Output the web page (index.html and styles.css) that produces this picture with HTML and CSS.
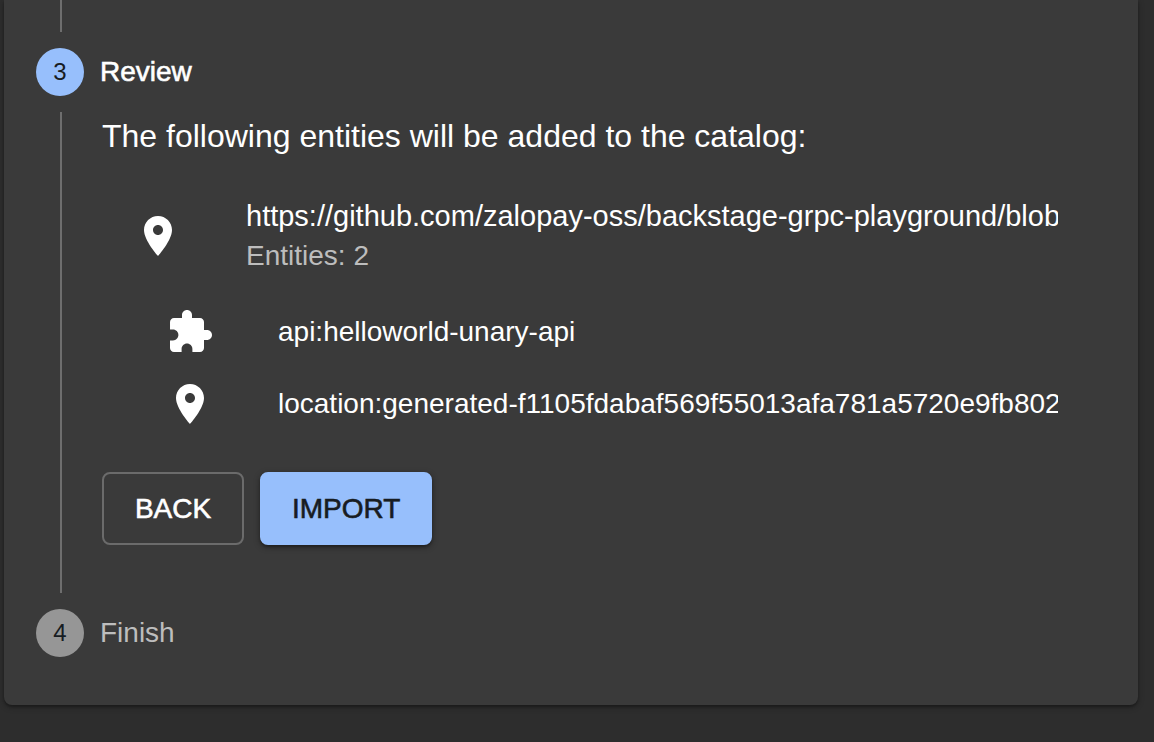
FILE: index.html
```html
<!DOCTYPE html>
<html lang="en">
<head>
<meta charset="utf-8">
<meta name="viewport" content="width=device-width, initial-scale=1">
<title>Import entities</title>
<link rel="stylesheet" href="styles.css">
</head>
<body>
<svg class="sprite" aria-hidden="true">
  <symbol id="icon-location" viewBox="0 0 24 24"><path d="M12 2C8.130 2 5 5.130 5 9c0 5.250 7 13 7 13s7-7.750 7-13c0-3.870-3.130-7-7-7zm0 9.500c-1.380 0-2.500-1.120-2.500-2.500s1.120-2.500 2.500-2.500 2.500 1.120 2.500 2.500-1.120 2.500-2.500 2.500z"/></symbol>
  <symbol id="icon-extension" viewBox="0 0 24 24"><path d="M20.500 11H19V7c0-1.100-.9-2-2-2h-4V3.500C13 2.120 11.880 1 10.500 1S8 2.120 8 3.500V5H4c-1.100 0-1.990.9-1.990 2v3.800H3.500c1.490 0 2.700 1.210 2.700 2.700s-1.210 2.700-2.700 2.700H2V20c0 1.100.9 2 2 2h3.800v-1.500c0-1.490 1.210-2.700 2.700-2.700 1.490 0 2.700 1.210 2.700 2.700V22H17c1.100 0 2-.9 2-2v-4h1.500c1.380 0 2.500-1.120 2.500-2.500S21.880 11 20.500 11z"/></symbol>
</svg>
<main class="card">
  <div class="connector"></div>
  <section class="step">
    <header class="step-label active">
      <span class="step-icon">3</span>
      <span class="step-title">Review</span>
    </header>
    <div class="step-content">
      <p class="intro">The following entities will be added to the catalog:</p>
      <ul class="list">
        <li>
          <div class="item item-location">
            <svg class="icon" aria-hidden="true"><use href="#icon-location"/></svg>
            <div class="item-text">
              <span class="primary url">https://github.com/zalopay-oss/backstage-grpc-playground/blob</span>
              <span class="secondary">Entities: 2</span>
            </div>
          </div>
          <ul class="nested">
            <li class="item">
              <svg class="icon" aria-hidden="true"><use href="#icon-extension"/></svg>
              <div class="item-text"><span class="primary">api:helloworld-unary-api</span></div>
            </li>
            <li class="item">
              <svg class="icon" aria-hidden="true"><use href="#icon-location"/></svg>
              <div class="item-text"><span class="primary">location:generated-f1105fdabaf569f55013afa781a5720e9fb802</span></div>
            </li>
          </ul>
        </li>
      </ul>
      <div class="actions">
        <button class="button outlined" type="button">BACK</button>
        <button class="button contained" type="button">IMPORT</button>
      </div>
    </div>
  </section>
  <section class="step">
    <header class="step-label">
      <span class="step-icon">4</span>
      <span class="step-title">Finish</span>
    </header>
  </section>
</main>
</body>
</html>
```

FILE: styles.css
```css
* {
  box-sizing: border-box;
}

body {
  margin: 0;
  background: #2d2d2d;
  color: #fff;
  font-family: "Helvetica Neue", "Liberation Sans", Arial, sans-serif;
  font-size: 28px;
  line-height: 40px;
}

.sprite {
  display: none;
}

.card {
  margin: 0 16px 32px 4px;
  padding: 0 32px 32px;
  background: #3a3a3a;
  border-radius: 0 0 8px 8px;
  box-shadow: 0 2px 6px rgba(0, 0, 0, 0.3), 0 2px 2px rgba(0, 0, 0, 0.2);
}

.connector {
  height: 32px;
  margin-left: 24px;
  border-left: 2px solid #6e6e6e;
}

.step-label {
  display: flex;
  align-items: center;
  gap: 16px;
  padding: 16px 0;
  color: #bdbdbd;
}

.step-label.active {
  color: #fff;
}

.step-icon {
  display: grid;
  place-items: center;
  width: 48px;
  height: 48px;
  border-radius: 50%;
  background: #969696;
  color: #171c22;
  font-size: 24px;
}

.active .step-icon {
  background: #97bffc;
}

/* Medium weight for a family that only has regular and bold. */
.active .step-title,
.button {
  -webkit-text-stroke: 0.6px currentColor;
}

.step-content {
  margin-left: 24px;
  padding: 0 16px 48px 40px;
  border-left: 2px solid #6e6e6e;
}

.intro {
  margin: 0;
  font-size: 32px;
  line-height: 48px;
}

.list,
.nested {
  margin: 0;
  padding: 0;
  list-style: none;
}

.list {
  padding: 16px 0;
}

.nested {
  padding-left: 32px;
}

.item {
  display: flex;
  align-items: center;
  padding: 16px 32px;
}

.item-location {
  padding-top: 20px;
  padding-bottom: 20px;
}

.icon {
  flex: none;
  width: 48px;
  height: 48px;
  margin: -4px 64px -4px 0;
  fill: #fff;
}

.item-text {
  flex: 1;
  min-width: 0;
}

.primary,
.secondary {
  display: block;
  overflow: hidden;
  white-space: nowrap;
}

.url {
  font-size: 29px;
}

.secondary {
  color: #bdbdbd;
}

.actions {
  display: flex;
  gap: 16px;
  padding-top: 16px;
}

.button {
  min-width: 142px;
  padding: 10px 30px;
  border: 2px solid #6b6b6b;
  border-radius: 8px;
  background: transparent;
  color: #fff;
  font: inherit;
  line-height: 49px;
}

.contained {
  border-color: #97bffc;
  background: #97bffc;
  color: #171c22;
  box-shadow: 0 2px 6px rgba(0, 0, 0, 0.4), 0 2px 2px rgba(0, 0, 0, 0.2);
}
```
